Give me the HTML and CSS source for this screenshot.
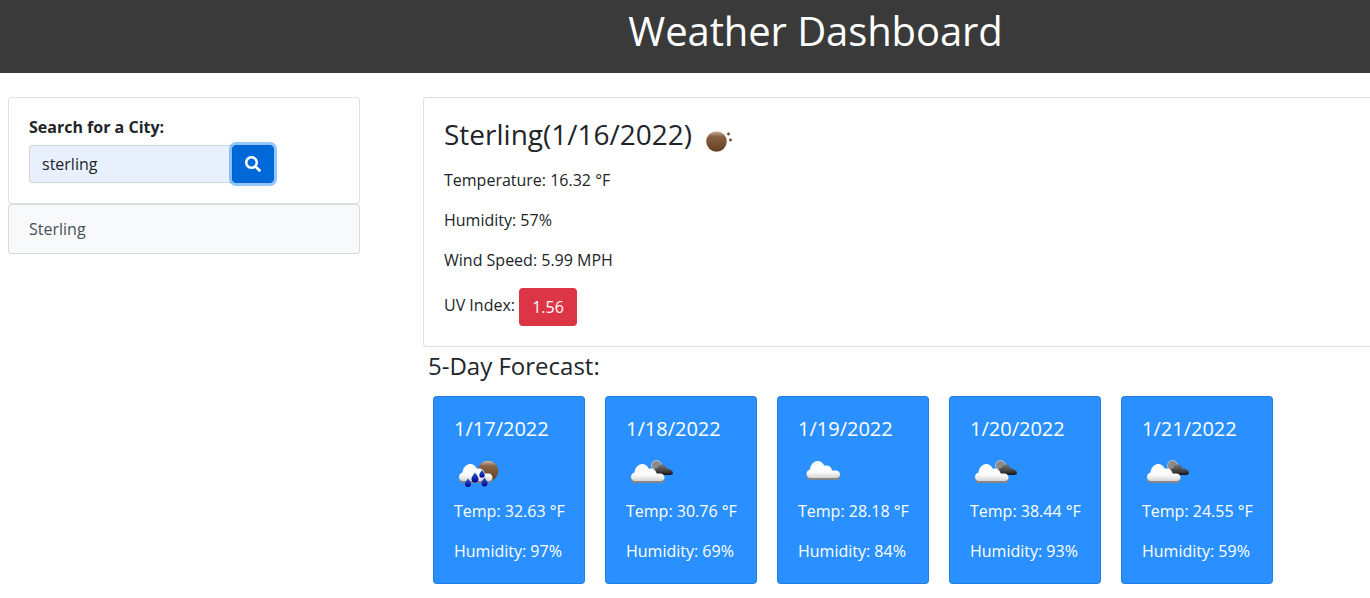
FILE: index.html
```html
<!DOCTYPE html>
<html lang="en">
<head>
<meta charset="utf-8">
<title>Weather Dashboard</title>
<link rel="stylesheet" href="styles.css">
</head>
<body>
<svg class="defs" aria-hidden="true">
  <defs>
    <linearGradient id="gWhite" x1="0" y1="0" x2="0" y2="1">
      <stop offset="0" stop-color="#ffffff"/>
      <stop offset=".65" stop-color="#fbfbfb"/>
      <stop offset="1" stop-color="#d4d4d4"/>
    </linearGradient>
    <linearGradient id="gDark" x1="0" y1="0" x2="0" y2="1">
      <stop offset="0" stop-color="#777777"/>
      <stop offset=".7" stop-color="#3a3a3a"/>
      <stop offset="1" stop-color="#111111"/>
    </linearGradient>
    <linearGradient id="gBrown" x1="0" y1="0" x2="0" y2="1">
      <stop offset="0" stop-color="#d2bba6"/>
      <stop offset=".25" stop-color="#8a6344"/>
      <stop offset="1" stop-color="#623d20"/>
    </linearGradient>
    <linearGradient id="gDrop" x1="0" y1="0" x2="0" y2="1">
      <stop offset="0" stop-color="#2a5fd0"/>
      <stop offset="1" stop-color="#00008f"/>
    </linearGradient>
    <path id="cloudShape" d="M12.500 29C10 29 8.500 27.200 8.500 25C8.500 22.600 10.200 21 12 20.600C12.500 15.500 15.800 12 19.500 12C22.600 12 25 14 26.300 16.800C29.600 15.600 33.400 17.300 34.200 21.500L38 21.500C40.400 21.500 42 23.400 42 25.400C42 27.500 40.400 29 38 29Z"/>
    <g id="cloudWhite">
      <use href="#cloudShape" class="cloud-shadow" y="2"/>
      <use href="#cloudShape" class="cloud-white"/>
    </g>
    <symbol id="icoClear" viewBox="0 0 50 50">
      <circle cx="10.500" cy="32.500" r="10.300" class="ball"/>
      <circle cx="22.500" cy="25" r="1.400" class="speck"/>
      <circle cx="24.500" cy="31" r="1.400" class="speck"/>
    </symbol>
    <symbol id="icoRain" viewBox="0 0 50 50">
      <circle cx="34" cy="22" r="10.300" class="ball"/>
      <use href="#cloudWhite" transform="translate(-3.500 3)"/>
      <path class="drop" d="M14 29.500c1.600 2.300 3 3.700 3 5.500a3 3 0 0 1-6 0c0-1.800 1.400-3.200 3-5.500z"/>
      <path class="drop" d="M21 23.500c1.900 2.700 3.500 4.300 3.500 6.400a3.500 3.500 0 0 1-7 0c0-2.100 1.600-3.700 3.500-6.400z"/>
      <path class="drop" d="M28 21c1.500 2.200 2.700 3.400 2.700 5a2.700 2.700 0 0 1-5.400 0c0-1.600 1.200-2.800 2.700-5z"/>
      <path class="drop" d="M30.500 28.500c1.700 2.400 3.100 3.900 3.100 5.800a3.100 3.100 0 0 1-6.200 0c0-1.900 1.400-3.400 3.100-5.800z"/>
    </symbol>
    <symbol id="icoOvercast" viewBox="0 0 50 50">
      <circle cx="30.500" cy="16.500" r="5" class="moon"/>
      <path class="cloud-dark" d="M31 26C29 26 28 24 28 22C28 20 30 19 31.500 19C32 16 35 15 37 15.500C39 16 40.500 18 40.500 20C42 19 44 20 44.500 21C46 21 47 22.500 47 23.500C47 25 46 26 44.500 26Z"/>
      <use href="#cloudWhite" transform="translate(-3.500 3)"/>
    </symbol>
    <symbol id="icoCloud" viewBox="0 0 50 50">
      <use href="#cloudWhite"/>
    </symbol>
  </defs>
</svg>

<header class="topbar">
  <h1 class="topbar-title">Weather Dashboard</h1>
</header>

<main class="layout">
  <aside class="sidebar">
    <form class="search-card">
      <label class="search-label" for="city">Search for a City:</label>
      <div class="search-row">
        <input class="search-input" id="city" type="text" value="sterling">
        <button class="search-btn" type="button" aria-label="Search">
          <svg class="search-icon" viewBox="0 0 512 512"><path d="M505 442.700L405.300 343c-4.500-4.500-10.600-7-17-7H372c27.600-35.300 44-79.700 44-128C416 93.100 322.900 0 208 0S0 93.100 0 208s93.100 208 208 208c48.300 0 92.700-16.400 128-44v16.300c0 6.400 2.500 12.500 7 17l99.700 99.700c9.400 9.400 24.600 9.400 33.900 0l28.300-28.300c9.400-9.400 9.400-24.600.1-34zM208 336c-70.700 0-128-57.200-128-128 0-70.700 57.200-128 128-128 70.700 0 128 57.200 128 128 0 70.700-57.200 128-128 128z"/></svg>
        </button>
      </div>
    </form>
    <div class="history-item">Sterling</div>
  </aside>

  <section class="content">
    <div class="current-card">
      <h2 class="current-title">Sterling(1/16/2022) <svg class="current-icon"><use href="#icoClear"/></svg></h2>
      <p class="line">Temperature: 16.32 °F</p>
      <p class="line">Humidity: 57%</p>
      <p class="line">Wind Speed: 5.99 MPH</p>
      <p class="uv"><span class="uv-label">UV Index:</span> <span class="uv-badge">1.56</span></p>
    </div>
    <h3 class="forecast-title">5-Day Forecast:</h3>
    <div class="forecast">
      <article class="day">
        <h4 class="day-date">1/17/2022</h4>
        <svg class="day-icon"><use href="#icoRain"/></svg>
        <p class="day-line">Temp: 32.63 °F</p>
        <p class="day-line last">Humidity: 97%</p>
      </article>
      <article class="day">
        <h4 class="day-date">1/18/2022</h4>
        <svg class="day-icon"><use href="#icoOvercast"/></svg>
        <p class="day-line">Temp: 30.76 °F</p>
        <p class="day-line last">Humidity: 69%</p>
      </article>
      <article class="day">
        <h4 class="day-date">1/19/2022</h4>
        <svg class="day-icon"><use href="#icoCloud"/></svg>
        <p class="day-line">Temp: 28.18 °F</p>
        <p class="day-line last">Humidity: 84%</p>
      </article>
      <article class="day">
        <h4 class="day-date">1/20/2022</h4>
        <svg class="day-icon"><use href="#icoOvercast"/></svg>
        <p class="day-line">Temp: 38.44 °F</p>
        <p class="day-line last">Humidity: 93%</p>
      </article>
      <article class="day">
        <h4 class="day-date">1/21/2022</h4>
        <svg class="day-icon"><use href="#icoOvercast"/></svg>
        <p class="day-line">Temp: 24.55 °F</p>
        <p class="day-line last">Humidity: 59%</p>
      </article>
    </div>
  </section>
</main>
</body>
</html>
```
FILE: styles.css
```css
* { box-sizing: border-box; }

html, body {
  margin: 0;
  height: 100%;
  overflow: hidden;
}

body {
  font-family: "Open Sans", "Liberation Sans", sans-serif;
  font-size: 16px;
  line-height: 1.5;
  color: #212529;
  background: #fff;
}

.defs { position: absolute; width: 0; height: 0; }

.cloud-white { fill: url(#gWhite); }
.cloud-shadow { fill: #858585; }
.cloud-dark { fill: url(#gDark); }
.ball { fill: url(#gBrown); }
.speck { fill: #6b4426; }
.moon { fill: #8a8a8a; stroke: #d0d0d0; stroke-width: .8; }
.drop { fill: url(#gDrop); }

.topbar {
  height: 73px;
  background: #3a3a3a;
  padding: 7px 0 0 261px;
  text-align: center;
}

.topbar-title {
  margin: 0;
  font-size: 40px;
  font-weight: 400;
  line-height: 48px;
  letter-spacing: -.1px;
  color: #fff;
}

.layout {
  display: flex;
  align-items: flex-start;
  padding: 24px 0 0 8px;
  gap: 63px;
}

.sidebar {
  flex: 0 0 352px;
  display: flex;
  flex-direction: column;
}

.search-card {
  height: 107px;
  padding: 20px;
  background: #fff;
  border: 1px solid rgba(0, 0, 0, .125);
  border-radius: 4px;
}

.search-label {
  display: block;
  font-weight: 700;
  line-height: 18px;
  margin-bottom: 9px;
}

.search-row { display: flex; }

.search-input {
  width: 203px;
  height: 38px;
  padding: 6px 12px;
  font: inherit;
  color: #212529;
  background: #e8f0fe;
  border: 1px solid #ced4da;
  border-right: 0;
  border-radius: 4px 0 0 4px;
  outline: 0;
}

.search-btn {
  display: flex;
  align-items: center;
  justify-content: center;
  width: 42px;
  height: 38px;
  padding: 0;
  background: #0069d9;
  border: 1px solid #0062cc;
  border-radius: 4px;
  box-shadow: 0 0 0 3px rgba(38, 143, 255, .5);
}

.search-icon { width: 16px; height: 16px; fill: #fff; }

.history-item {
  height: 50px;
  padding: 12px 20px;
  color: #495057;
  background: #f8f9fa;
  border: 1px solid rgba(0, 0, 0, .125);
  border-radius: 4px;
}

.content {
  flex: 0 0 1000px;
}

.current-card {
  height: 250px;
  padding: 20px;
  background: #fff;
  border: 1px solid rgba(0, 0, 0, .125);
  border-radius: 4px;
}

.current-title {
  display: flex;
  align-items: center;
  gap: 7px;
  height: 32px;
  margin: 0 0 18px;
  font-size: 28px;
  font-weight: 400;
  line-height: 32px;
  white-space: pre;
}

.current-icon { width: 50px; height: 50px; flex: none; }

.line { margin: 0 0 16px; }

.uv { margin: 0; display: flex; align-items: center; gap: 4px; }

.uv-label { padding-bottom: 4px; }

.uv-badge {
  display: block;
  width: 58px;
  height: 38px;
  line-height: 38px;
  text-align: center;
  color: #fff;
  background: #dc3545;
  border-radius: 4px;
}

.forecast-title {
  margin: 4px 0 0 5px;
  font-size: 24px;
  font-weight: 400;
  line-height: 29px;
}

.forecast {
  display: flex;
  gap: 20px;
  margin: 16px 0 0 10px;
}

.day {
  width: 152px;
  height: 188px;
  padding: 20px;
  color: #fff;
  background: #2a90ff;
  border: 1px solid rgba(0, 0, 0, .125);
  border-radius: 4px;
}

.day-date {
  margin: 0 0 8px;
  font-size: 20px;
  font-weight: 400;
  line-height: 24px;
}

.day-icon { display: block; width: 50px; height: 50px; }

.day-line { margin: 0 0 16px; white-space: nowrap; }
.day-line.last { margin: 0; }
```
